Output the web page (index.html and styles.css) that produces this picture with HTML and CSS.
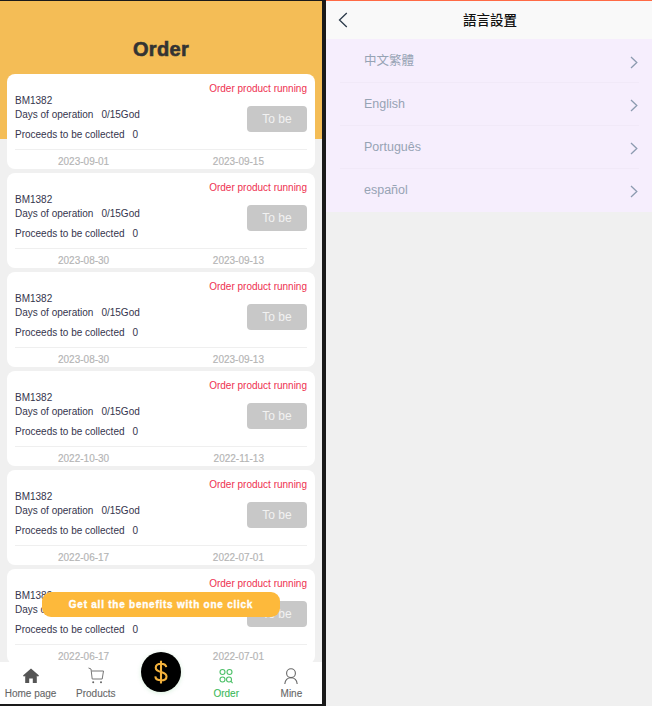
FILE: index.html
```html
<!DOCTYPE html>
<html lang="en">
<head>
<meta charset="utf-8">
<title>Order</title>
<link rel="stylesheet" href="styles.css">
</head>
<body>
<div class="desktop">
  <section class="phone">
    <div class="scroll">
      <div class="hero"><h1 class="title">Order</h1></div>
      <div class="cards">
        <article class="card">
          <div class="status">Order product running</div>
          <div class="card-body"><div class="info"><div class="code">BM1382</div><div class="days">Days of operation<span class="val">0/15God</span></div><div class="proceeds">Proceeds to be collected<span class="val">0</span></div></div><button class="tobe">To be</button></div>
          <div class="dates"><span>2023-09-01</span><span>2023-09-15</span></div>
        </article>
        <article class="card">
          <div class="status">Order product running</div>
          <div class="card-body"><div class="info"><div class="code">BM1382</div><div class="days">Days of operation<span class="val">0/15God</span></div><div class="proceeds">Proceeds to be collected<span class="val">0</span></div></div><button class="tobe">To be</button></div>
          <div class="dates"><span>2023-08-30</span><span>2023-09-13</span></div>
        </article>
        <article class="card">
          <div class="status">Order product running</div>
          <div class="card-body"><div class="info"><div class="code">BM1382</div><div class="days">Days of operation<span class="val">0/15God</span></div><div class="proceeds">Proceeds to be collected<span class="val">0</span></div></div><button class="tobe">To be</button></div>
          <div class="dates"><span>2023-08-30</span><span>2023-09-13</span></div>
        </article>
        <article class="card">
          <div class="status">Order product running</div>
          <div class="card-body"><div class="info"><div class="code">BM1382</div><div class="days">Days of operation<span class="val">0/15God</span></div><div class="proceeds">Proceeds to be collected<span class="val">0</span></div></div><button class="tobe">To be</button></div>
          <div class="dates"><span>2022-10-30</span><span>2022-11-13</span></div>
        </article>
        <article class="card">
          <div class="status">Order product running</div>
          <div class="card-body"><div class="info"><div class="code">BM1382</div><div class="days">Days of operation<span class="val">0/15God</span></div><div class="proceeds">Proceeds to be collected<span class="val">0</span></div></div><button class="tobe">To be</button></div>
          <div class="dates"><span>2022-06-17</span><span>2022-07-01</span></div>
        </article>
        <article class="card">
          <div class="status">Order product running</div>
          <div class="card-body"><div class="info"><div class="code">BM1382</div><div class="days">Days of operation<span class="val">0/15God</span></div><div class="proceeds">Proceeds to be collected<span class="val">0</span></div></div><button class="tobe">To be</button></div>
          <div class="dates"><span>2022-06-17</span><span>2022-07-01</span></div>
        </article>
      </div>
    </div>
    <div class="banner">Get all the benefits with one click</div>
    <nav class="tabbar">
      <a class="tab">
        <svg class="tab-icon" viewBox="0 0 18 18"><path d="M9 1.500 1 8.600l1 1.200 1.200-1V16h4v-4.600h3.600V16h4V8.800l1.200 1 1-1.200z" fill="#555"/></svg>
        <span>Home page</span>
      </a>
      <a class="tab">
        <svg class="tab-icon" viewBox="0 0 18 18" fill="none" stroke="#777" stroke-width="1"><path d="M1.500 1 4 2l1.200 10h10l1.300-8H4.500"/><circle cx="6.200" cy="15.200" r="1" fill="#666" stroke="none"/><circle cx="14" cy="15.200" r="1" fill="#666" stroke="none"/></svg>
        <span>Products</span>
      </a>
      <div class="tab tab-spacer"></div>
      <a class="tab tab-active">
        <svg class="tab-icon" viewBox="0 0 18 18" fill="none" stroke="#4cc068" stroke-width="1.100"><circle cx="5.500" cy="5" r="2.500"/><circle cx="12.500" cy="5" r="2.500"/><circle cx="5.500" cy="12.500" r="2.500"/><circle cx="12" cy="12.500" r="2.500"/><path d="m13.800 14.200 1.800 2"/></svg>
        <span>Order</span>
      </a>
      <a class="tab">
        <svg class="tab-icon" viewBox="0 0 18 18" fill="none" stroke="#666" stroke-width="1.100"><circle cx="9" cy="6.200" r="4.400"/><path d="M2.800 17c.4-4 2.800-6.200 6.200-6.200s5.800 2.200 6.200 6.200"/></svg>
        <span>Mine</span>
      </a>
    </nav>
    <div class="coin"><svg class="coin-icon" viewBox="0 0 16 28" fill="none" stroke="#f4b23c" stroke-width="2.400"><path d="M14 8.500C13.700 5.800 11.500 4.500 8 4.500 4.300 4.500 2 6.200 2 9c0 6.500 12.300 3.400 12.300 10 0 2.900-2.500 4.500-6.300 4.500-3.900 0-6.200-1.500-6.500-4.500M8 1v26"/></svg></div>
  </section>
  <section class="settings">
    <header class="settings-head">
      <svg class="back" viewBox="0 0 10 16" fill="none" stroke="#2b3a4a" stroke-width="1.300"><path d="M8.800 1 1.500 8l7.300 7"/></svg>
      <h2 class="settings-title">語言設置</h2>
    </header>
    <ul class="lang-list">
      <li class="lang"><span>中文繁體</span><svg class="chev" viewBox="0 0 8 13" fill="none" stroke="#8c9bb0" stroke-width="1.300"><path d="m1 1 5.800 5.500L1 12"/></svg></li>
      <li class="lang"><span>English</span><svg class="chev" viewBox="0 0 8 13" fill="none" stroke="#8c9bb0" stroke-width="1.300"><path d="m1 1 5.800 5.500L1 12"/></svg></li>
      <li class="lang"><span>Português</span><svg class="chev" viewBox="0 0 8 13" fill="none" stroke="#8c9bb0" stroke-width="1.300"><path d="m1 1 5.800 5.500L1 12"/></svg></li>
      <li class="lang"><span>español</span><svg class="chev" viewBox="0 0 8 13" fill="none" stroke="#8c9bb0" stroke-width="1.300"><path d="m1 1 5.800 5.500L1 12"/></svg></li>
    </ul>
  </section>
</div>
</body>
</html>
```
FILE: styles.css
```css
* { box-sizing: border-box; }
html, body { margin: 0; padding: 0; height: 100%; }
body {
  background: #1a1a1a;
  font-family: "Liberation Sans", Arial, sans-serif;
  overflow: hidden;
}
.desktop { display: flex; height: 706px; width: 652px; }

.phone {
  position: relative;
  width: 322px;
  height: 703px;
  margin-top: 1px;
  background: #f0f0f0;
  display: flex;
  flex-direction: column;
  overflow: hidden;
  flex: none;
}
.scroll { flex: 1; min-height: 0; overflow: hidden; position: relative; }
.hero { height: 138px; background: #f4bd56; padding-top: 37px; }
.title {
  margin: 0;
  text-align: center;
  font-size: 20px;
  line-height: 22px;
  font-weight: 700;
  color: #333;
  letter-spacing: .3px;
  -webkit-text-stroke: .6px #333;
}
.cards {
  display: flex;
  flex-direction: column;
  gap: 4px;
  margin-top: -65px;
  padding: 0 7px;
}
.card {
  flex: none;
  height: 95px;
  background: #fff;
  border-radius: 8px;
  padding: 9px 8px 0;
  color: #35354d;
  font-size: 10px;
}
.status { text-align: right; line-height: 12px; color: #ee3150; }
.card-body {
  display: flex;
  justify-content: space-between;
  height: 55px;
  border-bottom: 1px solid #efefef;
}
.code { line-height: 12px; }
.days { line-height: 14px; margin-top: 1px; }
.proceeds { line-height: 14px; margin-top: 5.500px; }
.val { margin-left: 8px; }
.tobe {
  width: 60px;
  height: 26px;
  margin-top: 11px;
  border: 0;
  border-radius: 4px;
  background: #c8c8c8;
  color: #f2f2f2;
  font: 12px "Liberation Sans", Arial, sans-serif;
  padding: 0;
}
.dates {
  display: flex;
  justify-content: space-between;
  padding: 6px 43px 0;
  line-height: 12px;
  color: #b4b4b4;
  -webkit-text-stroke: .15px #b4b4b4;
}

.banner {
  position: absolute;
  left: 42px;
  top: 591px;
  width: 238px;
  height: 25px;
  border-radius: 9px;
  background: #fdb93b;
  color: #fff;
  font-size: 10px;
  font-weight: 700;
  letter-spacing: .76px;
  -webkit-text-stroke: .35px #fff;
  line-height: 25px;
  text-align: center;
}

.tabbar {
  flex: none;
  height: 42px;
  margin: 0 -2px;
  background: #fff;
  display: grid;
  grid-template-columns: repeat(5, 1fr);
}
.tab {
  display: flex;
  flex-direction: column;
  align-items: center;
  padding-top: 5px;
  font-size: 10px;
  line-height: 12px;
  color: #666;
  -webkit-text-stroke: .1px #666;
}
.tab-icon { width: 18px; height: 18px; margin-bottom: 3px; display: block; }
.tab-active { color: #3cb95a; -webkit-text-stroke: .1px #3cb95a; }
.coin {
  position: absolute;
  left: 141px;
  top: 651px;
  width: 40px;
  height: 40px;
  border-radius: 50%;
  background: #000;
  display: flex;
  align-items: center;
  justify-content: center;
  box-shadow: 0 1px 4px rgba(90, 190, 110, .25);
}
.coin-icon { width: 14px; height: 26px; display: block; }

.settings {
  flex: 1;
  margin-left: 4px;
  background: #f0f0f0;
  border-top: 1px solid #ff6a45;
  height: 706px;
}
.settings-head {
  height: 38px;
  background: #f9f9f9;
  position: relative;
  display: flex;
  align-items: center;
  justify-content: center;
}
.settings-title {
  margin: 0;
  font-family: "Noto Sans CJK TC", "Liberation Sans", sans-serif;
  font-size: 13.500px;
  font-weight: 500;
  color: #111;
  line-height: 36px;
  height: 38px;
  position: relative;
  left: 1px;
}
.back { position: absolute; left: 12px; top: 11px; width: 10px; height: 16px; }
.lang-list {
  margin: 0;
  padding: 1px 13px 0 14px;
  list-style: none;
  background: #f6eefd;
}
.lang {
  height: 43px;
  display: flex;
  align-items: center;
  justify-content: space-between;
  padding: 0 1px 0 24px;
  border-bottom: 1px solid #f1e9f8;
  font-size: 12.500px;
  line-height: 14px;
  color: #96a3b4;
  font-family: "Liberation Sans", "Noto Sans CJK TC", sans-serif;
}
.lang:last-child { border-bottom-color: transparent; }
.chev { width: 8px; height: 13px; position: relative; top: 1px; }
```
